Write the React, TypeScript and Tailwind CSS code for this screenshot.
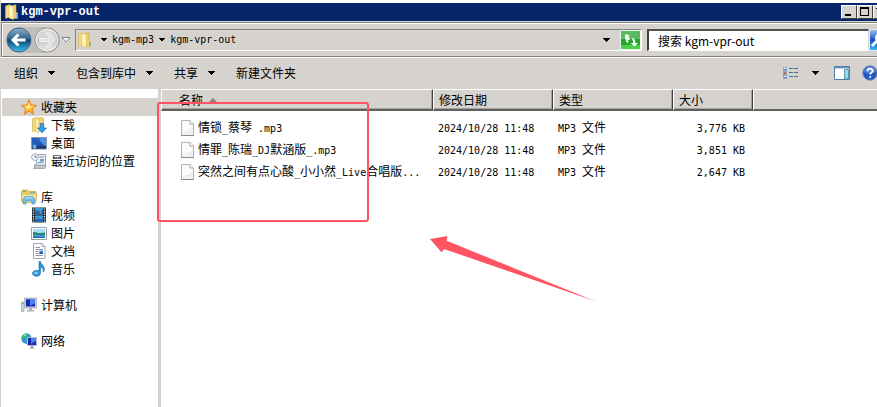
import { useState, type ReactNode } from "react"
import clsx from "clsx"

const files = [
  { name: "情锁_蔡琴 .mp3", date: "2024/10/28 11:48", type: "MP3 文件", size: "3,776 KB" },
  { name: "情罪_陈瑞_DJ默涵版_.mp3", date: "2024/10/28 11:48", type: "MP3 文件", size: "3,851 KB" },
  { name: "突然之间有点心酸_小小然_Live合唱版...", date: "2024/10/28 11:48", type: "MP3 文件", size: "2,647 KB" },
]

// Latin runs are set in a half-width mono face, the rest keeps the CJK face
const Mixed = ({ text }: { text: string }) => (
  <>
    {text.split(/([\x20-\x7e]+)/).filter(Boolean).map((part, i) =>
      /^[\x20-\x7e]/.test(part)
        ? <span key={i} className="font-['DejaVu_Sans_Mono',monospace] text-[10px]">{part}</span>
        : part
    )}
  </>
)

const Caret = ({ small }: { small?: boolean }) => (
  <svg viewBox="0 0 7 4" shapeRendering="crispEdges" className={clsx("h-1 shrink-0", small ? "w-[6px]" : "w-[7px]")}>
    <path d="M0 0H7V1H6V2H5V3H4V4H3V3H2V2H1V1H0Z" fill="#000" />
  </svg>
)

const FolderIcon = () => (
  <svg viewBox="0 0 16 16" className="h-4 w-4">
    <path d="M1.500 2 6 .500v12.500l-4.500 1.500z" fill="#f3dc85" stroke="#d2b048" strokeWidth=".6" />
    <path d="M8 1.500 12 .800V8l1.500 1v5.500H8z" fill="#efd070" stroke="#c9a440" strokeWidth=".6" />
    <path d="M5 1 9.500 2.500V15.500L5 14z" fill="#fdf0b0" stroke="#dcbc58" strokeWidth=".6" />
    <path d="M6.200 3v10.500" stroke="#fffbe0" />
    <path d="M12.800 10v4" stroke="#69b7e8" strokeWidth="1.600" />
  </svg>
)

const StarIcon = () => (
  <svg viewBox="0 0 16 16" className="h-4 w-4">
    <path d="M8 .8 10 6l5.500.300-4.300 3.500 1.500 5.400L8 12.200l-4.700 3 1.400-5.400L.500 6.300 6 6z" fill="#ffb62e" stroke="#e8801c" />
    <path d="M8 3 9.300 7l3.500.300-4 2L5 11l.800-2.500L3 7l3.500-.200z" fill="#ffe48a" />
  </svg>
)

const DownloadIcon = () => (
  <svg viewBox="0 0 16 16" className="h-4 w-4">
    <path d="M1.500 1.500 6 .500v13l-4.500 1z" fill="#f3dc85" stroke="#c8a63c" strokeWidth=".6" />
    <path d="M7 .800h5.500v12.500H7z" fill="#efd370" stroke="#c8a63c" strokeWidth=".6" />
    <path d="M4.500 1 8 2.500v13L4.500 14.500z" fill="#fff0b4" stroke="#d4b24c" strokeWidth=".6" />
    <path d="M9.300 6.500h3.400V11h2.800L11 15.800 6.500 11h2.800z" fill="#38a0ea" stroke="#1767b4" strokeWidth=".7" />
  </svg>
)

const DesktopIcon = () => (
  <svg viewBox="0 0 16 16" className="h-4 w-4">
    <path d="M.5 2.500h15v11.500H.500z" fill="#1d4fa6" stroke="#8a97aa" />
    <path d="M1 3h14v3.500L1 11z" fill="#245fc0" />
    <path d="M8 3h7v8C12 10 9 7 8 3z" fill="#4a90e4" />
    <path d="M1 11.500h14v2H1z" fill="#183460" />
    <circle cx="3.500" cy="11.500" r="2" fill="#4dbaf2" />
    <path d="M2.500 10.200h1v1.200h-1z" fill="#f45a28" />
    <path d="M3.500 12h1.200v1H3.500z" fill="#ffd53f" />
  </svg>
)

const RecentIcon = () => (
  <svg viewBox="0 0 16 16" className="h-4 w-4">
    <path d="M5 1.500h9.500v10L13 14.500H4l1.500-3z" fill="#eef2f5" stroke="#9aa3aa" />
    <path d="M3 12h11.500c1 1.500 0 3.500-1.500 3.500H2.500c1.300-.800 1.300-2.300.500-3.500z" fill="#bfc5ca" stroke="#858e96" strokeWidth=".7" />
    <path d="M8.500 4H13M7 9.500h5" stroke="#5e88b0" strokeWidth=".9" />
    <path d="M9 6h4v2.500H9z" fill="#6c9cc8" />
    <circle cx="4" cy="4" r="3.400" fill="#f7f9fb" stroke="#9aa7b3" strokeWidth=".9" />
    <path d="M4 2v2.200h2" fill="none" stroke="#42576c" strokeWidth=".8" />
  </svg>
)

const LibraryIcon = () => (
  <svg viewBox="0 0 16 16" className="h-4 w-4">
    <path d="M.5 2.500 1.500 1h5l1 1.500h7.500v10H.500z" fill="#edd06c" stroke="#cfa944" strokeWidth=".8" />
    <path d="M2 2.300h3" stroke="#43a840" />
    <path d="M9 3.800h5" stroke="#5fa0d4" />
    <path d="M.5 5h15l-.800 8.500H1.300z" fill="#fae7a0" stroke="#d3b04a" strokeWidth=".8" />
    <path d="M2.500 15c-.500-5 .500-7 2-7.500h7c1.500.500 2.500 2.500 2 7.500h-2.500v-3h-6v3z" fill="#72bdeb" stroke="#4292cb" strokeWidth=".7" />
    <path d="M4.500 9.300c2-.900 5-.900 7 0" fill="none" stroke="#c8eafa" />
  </svg>
)

const VideoIcon = () => (
  <svg viewBox="0 0 16 16" className="h-4 w-4">
    <path d="M1 .5h14v15H1z" fill="#24303a" />
    <path d="M4 1h8v6.500H4zM4 8.500h8V15H4z" fill="#3c9ce0" />
    <path d="M4 4 7 3l2 2.500 3-3v5H4zM4 12l3-1.500 2 2 3-1.500v4H4z" fill="#246ab2" />
    <path d="M9 4.500 11 6l-2 1zM5 10l2 1-1 1.500z" fill="#e57a4c" />
    <path d="M2.500 1.500v14M13.500 1.500v14" stroke="#e8eef2" strokeWidth="1.200" strokeDasharray="1.300 1.200" />
  </svg>
)

const PictureIcon = () => (
  <svg viewBox="0 0 16 16" className="h-4 w-4">
    <path d="M.5 2.500h15v12H.500z" fill="#fff" stroke="#98a2ab" />
    <path d="M2 4h12v9H2z" fill="#a8e0f8" />
    <path d="M2 7c3-.500 5 2 12 .500V10H2z" fill="#2a8a6c" />
    <path d="M2 9.500h12V13H2z" fill="#2472b5" />
    <path d="M2 10.800c4-1 7 1 12 0" fill="none" stroke="#67bde2" />
  </svg>
)

const DocumentIcon = () => (
  <svg viewBox="0 0 16 16" className="h-4 w-4">
    <path d="M2.500.5H11l3 3v12H2.500z" fill="#fff" stroke="#9aa4b2" />
    <path d="M11 .5v3h3" fill="#dfe6ee" stroke="#8d98a6" strokeWidth=".8" />
    <path d="M4.500 4.500h4.500M4.500 6.500h7.500M4.500 8.500h3M4.500 10.500h3M4.500 12.500h7.500" stroke="#8b98b4" />
    <path d="M8.500 7.500h3.500v3.500H8.500z" fill="#3a8ad2" />
    <path d="M8.500 9.500H12V11H8.500z" fill="#205080" />
  </svg>
)

const MusicIcon = () => (
  <svg viewBox="0 0 16 16" className="h-4 w-4">
    <path d="M8 .5h1.500C10 4 14.500 4.500 13 10.500h-.800C12.500 7.500 11 6.500 9.500 6v6.500A4 3 0 1 1 8 10z" fill="#2995dc" stroke="#1268ad" strokeWidth=".6" />
    <ellipse cx="5" cy="12" rx="2.200" ry="1.300" fill="#79cbf5" />
  </svg>
)

const ComputerIcon = () => (
  <svg viewBox="0 0 16 16" className="h-4 w-4">
    <path d="M.5 5h2.500v9.500H.500z" fill="#d5d9dc" stroke="#9aa1a7" strokeWidth=".7" />
    <path d="M1 6.500h1.500" stroke="#37c437" />
    <path d="M3.500 1h12v10h-12z" fill="#c9ced3" stroke="#a4abb2" strokeWidth=".8" />
    <path d="M5 2.300h9v7.200H5z" fill="#1428b8" />
    <path d="M9 2.300h5v4L9 9z" fill="#4d82ee" />
    <path d="M8 11h3v2h2v1.500H6V13h2z" fill="#aeb4ba" />
  </svg>
)

const NetworkIcon = () => (
  <svg viewBox="0 0 16 16" className="h-4 w-4">
    <circle cx="5.500" cy="5.500" r="5.200" fill="#3196de" />
    <path d="M1 4c1-2.500 3-3.500 5-3.500L7 2 5 4 3 4.500 2 7zM6 5l4-2v4L7 10 5 8z" fill="#3fc24a" />
    <path d="M3 2.500 5 1.500" stroke="#c8f1ff" />
    <path d="M6.500 4.500h9v8h-9z" fill="#1428b8" stroke="#b5bec8" />
    <path d="M10 5h5v3l-5 3z" fill="#4d80ed" />
    <path d="M10 13h2v1.500h1.500v1h-5v-1H10z" fill="#8c98a6" />
  </svg>
)

const FileIcon = () => (
  <svg viewBox="0 0 13 16" className="h-4 w-[13px] shrink-0">
    <path d="M.5.500h8.500l3.500 3.500v11.500H.500z" fill="#fcfafc" stroke="#b4b2b4" />
    <path d="M1 13 12 8v7H1z" fill="#f1eff1" />
    <path d="M9 .500v3.500h3.500" fill="#fff" stroke="#a8a6a8" />
    <path d="M0 15.500h13" stroke="#8c8a8c" />
  </svg>
)

const RefreshIcon = () => (
  <svg viewBox="0 0 19 18" className="h-[18px] w-[19px]">
    <path d="M0 0h19v18H0z" fill="#24a52c" />
    <path d="M0 0h19v8H0z" fill="#5cb860" />
    <path d="M0 14h19v4H0z" fill="#4fce48" />
    <path d="M6.500 2.500v2.300h3v2h-3V9L2.800 5.700z" fill="#fff" transform="rotate(50 6 6)" />
    <path d="M5.500 7.500c0 2 .500 3 1.500 4" fill="none" stroke="#fff" strokeWidth="2" />
    <path d="M13.500 15.500 9.500 12H12c0-2-.300-4-1.500-5.500 2.500.500 3.800 2.500 4 5.500H17z" fill="#fff" />
  </svg>
)

const NavArrow = ({ active }: { active?: boolean }) => (
  <svg viewBox="0 0 26 26" className="h-[26px] w-[26px]">
    <defs>
      <linearGradient id={active ? "navBlue" : "navGray"} x1="0" y1="0" x2="0" y2="1">
        <stop offset="0" stopColor={active ? "#8fb0c6" : "#dcdcdc"} />
        <stop offset=".45" stopColor={active ? "#2c6690" : "#d2d2d2"} />
        <stop offset=".5" stopColor={active ? "#0c4472" : "#c6c6c6"} />
        <stop offset="1" stopColor={active ? "#38c4f2" : "#e8e8e8"} />
      </linearGradient>
    </defs>
    <circle cx="13" cy="13" r="12" fill={active ? "url(#navBlue)" : "url(#navGray)"} stroke={active ? "#4a6478" : "#8e8e8e"} />
    {!active && <circle cx="13" cy="13" r="11" fill="none" stroke="#f0f0f0" />}
    {active
      ? <path d="M12.500 7.500 7 13l5.500 5.500M8 13h11.500" fill="none" stroke="#fff" strokeWidth="3" />
      : <path d="M12 6h3l6 7-6 7h-3l4-5.500H6v-3h10z" fill="#dedede" stroke="#f4f4f4" />}
  </svg>
)

const NavItem = ({ icon, label, root, active }: { icon: ReactNode; label: string; root?: boolean; active?: boolean }) => (
  <a href="#" className={clsx("ml-px flex h-[18px] items-center gap-1 whitespace-nowrap", root ? "pl-[19px]" : "pl-[29px]", active && "bg-[#d6d3ce]")}>
    {icon}
    <span>{label}</span>
  </a>
)

const WindowButton = ({ label, children }: { label: string; children: ReactNode }) => (
  <button aria-label={label} className="h-[14px] w-4 shrink-0 border border-t-white border-l-white border-r-[#404040] border-b-[#404040] bg-[#d6d3ce]">
    <svg viewBox="0 0 14 12" shapeRendering="crispEdges" className="h-3 w-[14px]">{children}</svg>
  </button>
)

const HeadCell = ({ children }: { children?: ReactNode }) => (
  <th className="h-[22px] border-t border-r border-b-2 border-l border-t-white border-r-[#404040] border-b-[#606060] border-l-white p-0 pl-[5px] text-left font-normal shadow-[inset_-1px_-1px_0_#a5a29c] last:border-r-0 last:shadow-none">
    {children}
  </th>
)

export default function App() {
  const [query, setQuery] = useState("")

  return (
    <div className="relative flex min-h-screen flex-col overflow-hidden border-l border-[#d6d3ce] bg-[#d6d3ce] font-['Noto_Sans_CJK_SC',sans-serif] text-xs leading-4 text-black">
      {/* Title bar */}
      <header className="flex h-[21px] items-center border-t-3 border-white bg-[#08246b] pl-[3px]">
        <FolderIcon />
        <h1 className="ml-px flex-1 font-['Liberation_Mono',monospace] text-xs font-bold text-white">kgm-vpr-out</h1>
        <div className="-mr-3 flex shrink-0">
          <WindowButton label="最小化"><path d="M3 8h6v2H3z" /></WindowButton>
          <WindowButton label="最大化"><path d="M2 1h9v9H2zM3 3v6h7V3z" fillRule="evenodd" /></WindowButton>
          <WindowButton label="关闭"><path d="M3 2l7 7M10 2 3 9" stroke="#000" strokeWidth="2" /></WindowButton>
        </div>
      </header>

      {/* Address bar */}
      <div className="mt-px flex h-[35px] shrink-0 items-center border-y border-l border-[#808080] pl-1 shadow-[inset_1px_1px_0_#fff,0_1px_0_#fff]">
        <div className="flex shrink-0 items-center gap-[2px] rounded-full bg-[#c0beba]">
          <button aria-label="后退"><NavArrow active /></button>
          <button aria-label="前进"><NavArrow /></button>
        </div>
        <button aria-label="历史记录" className="ml-px shrink-0">
          <svg viewBox="0 0 10 6" className="h-[6px] w-[10px]"><path d="M1 .5h8L5 5z" fill="#fff" stroke="#7a8294" /></svg>
        </button>
        <nav aria-label="地址" className="ml-1 flex h-[22px] flex-1 items-center border border-t-[#808080] border-r-white border-b-white border-l-[#808080] pl-px font-['DejaVu_Sans_Mono',monospace] text-[10px]">
          <FolderIcon />
          <span className="ml-2 flex items-center gap-[5px]">
            <Caret small />
            <a href="#">kgm-mp3</a>
            <Caret small />
            <a href="#">kgm-vpr-out</a>
          </span>
          <button aria-label="展开地址" className="mr-[10px] ml-auto"><Caret /></button>
          <button aria-label="刷新" className="h-5 w-[21px] border border-[#e8f4e8]"><RefreshIcon /></button>
        </nav>
        <input
          aria-label="搜索 kgm-vpr-out"
          placeholder="搜索 kgm-vpr-out"
          value={query}
          onChange={e => setQuery(e.target.value)}
          className="ml-[5px] h-[22px] w-[222px] shrink-0 border-t-2 border-r border-b border-l-2 border-t-[#505050] border-r-[#d6d3ce] border-b-white border-l-[#404040] bg-white pl-[9px] text-xs outline-none placeholder:text-black"
        />
        <button aria-label="搜索" className="-mr-3 h-[22px] w-5 shrink-0 border border-[#e4ecf6] bg-linear-to-b from-[#9cc0ec] via-[#1b4fc4] to-[#38b8f0]">
          <svg viewBox="0 0 18 20" className="h-5 w-[18px]">
            <circle cx="10" cy="8" r="4" fill="none" stroke="#fff" strokeWidth="2" />
            <path d="m7 11-5 5" stroke="#fff" strokeWidth="3" />
          </svg>
        </button>
      </div>

      {/* Command bar */}
      <div className="flex h-8 shrink-0 items-center gap-[21px] pl-[13px] whitespace-nowrap">
        {["组织", "包含到库中", "共享"].map(label => (
          <button key={label} className="flex items-center gap-[10px]">{label}<Caret /></button>
        ))}
        <button>新建文件夹</button>
        <div className="-mr-px ml-auto flex shrink-0 items-center">
          <button aria-label="更改视图">
            <svg viewBox="0 0 16 12" shapeRendering="crispEdges" className="h-3 w-4">
              <path d="M0 0h4v12H0z" fill="#8fa3c4" />
              <path d="M1 1h2v2H1zM1 5h2v2H1zM1 9h2v2H1z" fill="#fff" />
              <path d="M6 1h4v1H6zM11 1h4v1h-4zM6 5h4v1H6zM11 5h4v1h-4zM6 9h4v1H6zM11 9h4v1h-4z" fill="#4d6d93" />
              <path d="M1 2h2v1H1zM1 10h2v1H1z" fill="#4779b5" />
              <path d="M1 5h2v2H1z" fill="#e0584a" />
            </svg>
          </button>
          <button aria-label="更多选项" className="ml-[13px]"><Caret /></button>
          <button aria-label="预览窗格" className="ml-[15px]">
            <svg viewBox="0 0 16 14" className="h-[14px] w-4">
              <path d="M.5.500h15v13H.500z" fill="#fff" stroke="#4f7fa8" />
              <path d="M1 1h14v1.500H1z" fill="#6b9ac0" />
              <path d="M10.500 3.500h4v9.500h-4z" fill="#8fdcf0" stroke="#46809f" strokeWidth=".8" />
            </svg>
          </button>
          <button aria-label="帮助" className="ml-3">
            <svg viewBox="0 0 16 16" className="h-4 w-4">
              <circle cx="8" cy="8" r="7.300" fill="#2456c4" stroke="#8193b5" />
              <path d="M2 7a6 5.500 0 0 1 12 0c-4 2-8 2-12 0z" fill="#4f80da" />
              <path d="M5.500 6.300c0-3.500 5.200-3.300 5.200-.500C10.700 7.500 8.200 7.500 8.200 9.500M8.200 11v1.800" fill="none" stroke="#fff" strokeWidth="1.800" />
            </svg>
          </button>
        </div>
      </div>

      <div className="flex flex-1">
        {/* Navigation pane */}
        <nav aria-label="导航窗格" className="flex w-[157px] shrink-0 flex-col gap-[18px] bg-white pt-[9px]">
          <div>
            <NavItem root active icon={<StarIcon />} label="收藏夹" />
            <NavItem icon={<DownloadIcon />} label="下载" />
            <NavItem icon={<DesktopIcon />} label="桌面" />
            <NavItem icon={<RecentIcon />} label="最近访问的位置" />
          </div>
          <div>
            <NavItem root icon={<LibraryIcon />} label="库" />
            <NavItem icon={<VideoIcon />} label="视频" />
            <NavItem icon={<PictureIcon />} label="图片" />
            <NavItem icon={<DocumentIcon />} label="文档" />
            <NavItem icon={<MusicIcon />} label="音乐" />
          </div>
          <NavItem root icon={<ComputerIcon />} label="计算机" />
          <NavItem root icon={<NetworkIcon />} label="网络" />
        </nav>

        {/* File list */}
        <main className="ml-[3px] min-w-0 flex-1 bg-white">
          <table className="w-full table-fixed border-separate border-spacing-0 whitespace-nowrap">
            <colgroup>
              <col className="w-[272px]" />
              <col className="w-[120px]" />
              <col className="w-[120px]" />
              <col className="w-[80px]" />
              <col />
            </colgroup>
            <thead className="bg-[#d6d3ce]">
              <tr>
                <HeadCell>
                  <span className="flex items-center gap-[6px] pl-3">
                    名称
                    <svg viewBox="0 0 8 4" className="h-1 w-2"><path d="M4 0 8 4H0z" fill="#848284" /></svg>
                  </span>
                </HeadCell>
                <HeadCell>修改日期</HeadCell>
                <HeadCell>类型</HeadCell>
                <HeadCell>大小</HeadCell>
                <HeadCell />
              </tr>
            </thead>
            <tbody className="before:block before:h-[6px] before:content-['']">
              {files.map(f => (
                <tr key={f.name} className="h-[22px]">
                  <td className="p-0 pl-5">
                    <div className="flex items-center gap-1">
                      <FileIcon />
                      <span><Mixed text={f.name} /></span>
                    </div>
                  </td>
                  <td className="p-0 pl-[5px]"><Mixed text={f.date} /></td>
                  <td className="p-0 pl-[5px]"><Mixed text={f.type} /></td>
                  <td className="p-0 pr-2 text-right"><Mixed text={f.size} /></td>
                  <td className="p-0" />
                </tr>
              ))}
            </tbody>
          </table>
        </main>
      </div>

      {/* Callout over the list */}
      <div className="pointer-events-none absolute top-[102px] left-[156px] h-[120px] w-[212px] rounded-[3px] border-2 border-[#ff5364]" />
      <svg viewBox="0 0 166 66" className="pointer-events-none absolute top-[236px] left-[429px] h-[66px] w-[166px]">
        <path d="M0 3 17.500 0 16.500 4.700 166 65.500 14 13 11.700 16.500z" fill="#ff5364" />
      </svg>
    </div>
  )
}
